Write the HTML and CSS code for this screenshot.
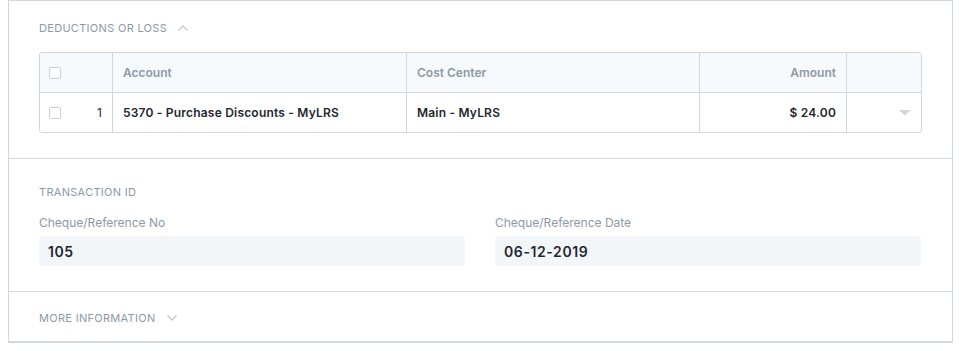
FILE: index.html
```html
<!DOCTYPE html>
<html>
<head>
<meta charset="utf-8">
<link rel="stylesheet" href="styles.css">
</head>
<body>
<div class="card">
  <section class="section sec-table">
    <div class="sec-head">
      <span>DEDUCTIONS OR LOSS</span>
      <svg class="chev" width="12" height="8" viewBox="0 0 12 8"><path d="M1.5 6.5 L6 2 L10.5 6.5" fill="none" stroke="#c2cad2" stroke-width="1.4"/></svg>
    </div>
    <div class="grid">
      <div class="row head">
        <div class="cell c-idx"><span class="chk"></span></div>
        <div class="cell c-acc">Account</div>
        <div class="cell c-cc">Cost Center</div>
        <div class="cell c-amt">Amount</div>
        <div class="cell c-act"></div>
      </div>
      <div class="row body">
        <div class="cell c-idx"><span class="chk"></span><span class="num">1</span></div>
        <div class="cell c-acc">5370 - Purchase Discounts - MyLRS</div>
        <div class="cell c-cc">Main - MyLRS</div>
        <div class="cell c-amt">$ 24.00</div>
        <div class="cell c-act"><svg width="12" height="6" viewBox="0 0 12 6"><path d="M0 0 H12 L6 5.5 Z" fill="#d1d6db"/></svg></div>
      </div>
    </div>
  </section>
  <section class="section sec-fields">
    <div class="sec-head"><span>TRANSACTION ID</span></div>
    <div class="fields">
      <div class="field">
        <div class="label">Cheque/Reference No</div>
        <div class="input">105</div>
      </div>
      <div class="field">
        <div class="label">Cheque/Reference Date</div>
        <div class="input">06-12-2019</div>
      </div>
    </div>
  </section>
  <section class="section sec-more">
    <div class="sec-head">
      <span>MORE INFORMATION</span>
      <svg class="chev" width="12" height="8" viewBox="0 0 12 8"><path d="M1.5 1.5 L6 6 L10.5 1.5" fill="none" stroke="#c2cad2" stroke-width="1.4"/></svg>
    </div>
  </section>
</div>
</body>
</html>
```
FILE: styles.css
```css
* { box-sizing: border-box; }
body {
  margin: 0 0 0 8px;
  background: #fff;
  font-family: Inter, "Noto Sans", sans-serif;
  color: #1f272e;
}
.card {
  width: 945px;
  border: 1px solid #d1d8dd;
  border-bottom: 2px solid #d1d8dd;
  background: #fff;
}
.section {
  padding: 0 30px;
  border-bottom: 1px solid #d1d8dd;
}
.section:last-child { border-bottom: none; }
.sec-table { padding-top: 19px; padding-bottom: 25px; }
.sec-fields { padding-top: 25px; padding-bottom: 25px; }
.sec-more { padding-top: 18px; padding-bottom: 16px; }
.sec-head {
  display: flex;
  align-items: center;
  gap: 10px;
  height: 15px;
  font-size: 11px;
  letter-spacing: 0.3px;
  color: #8d99a6;
}
.sec-table .sec-head { margin-bottom: 17px; }
.sec-fields .sec-head { margin-bottom: 16px; }
.grid {
  width: 883px;
  border: 1px solid #d1d8dd;
  border-radius: 3px;
  overflow: hidden;
}
.row { display: flex; height: 40px; }
.row.head { background: #f7fafc; border-bottom: 1px solid #d1d8dd; height: 40px; }
.row.body { height: 39px; }
.cell {
  display: flex;
  align-items: center;
  padding: 0 10px;
  font-size: 12px;
  font-weight: 600;
  border-right: 1px solid #d1d8dd;
}
.cell:last-child { border-right: none; }
.head .cell { color: #8d99a6; }
.body .cell { color: #1f272e; letter-spacing: 0.2px; }
.c-idx { width: 73px; justify-content: space-between; padding-left: 9px; font-weight: 400; }
.c-acc { width: 294px; }
.c-cc { width: 293px; }
.c-amt { width: 147px; justify-content: flex-end; }
.c-act { flex: 1; justify-content: flex-end; padding-right: 10px; }
.chk {
  width: 12px;
  height: 12px;
  border: 1px solid #c8cfd5;
  border-radius: 2px;
  background: #fff;
}
.num { font-weight: 400; font-size: 12px; color: #1f272e; }
.fields {
  display: grid;
  grid-template-columns: 426px 426px;
  column-gap: 30px;
}
.label {
  font-size: 12px;
  color: #8d99a6;
  height: 15px;
  margin-bottom: 6px;
}
.input {
  height: 30px;
  background: #f3f6f9;
  border-radius: 3px;
  padding: 0 9px;
  display: flex;
  align-items: center;
  font-size: 14px;
  font-weight: 600;
  letter-spacing: 0.6px;
  color: #1f272e;
}
```
